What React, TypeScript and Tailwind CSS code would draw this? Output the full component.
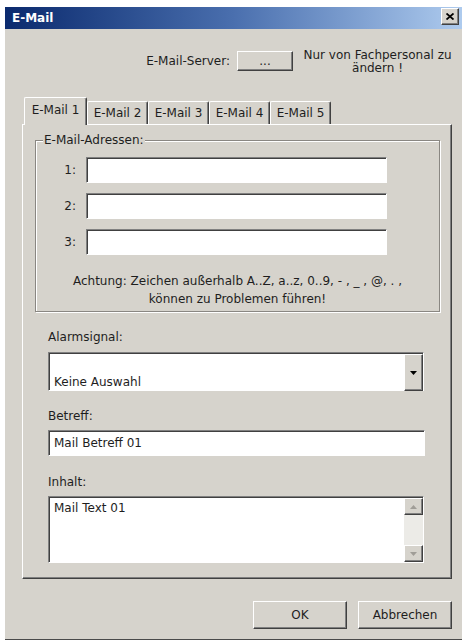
import React from 'react';

// classic 3D frame helpers
const raised =
  'border border-t-white border-l-white border-r-[#404040] border-b-[#404040] shadow-[inset_-1px_-1px_0_#808080]';
const sunken =
  'border border-t-[#808080] border-l-[#808080] border-r-white border-b-white shadow-[inset_1px_1px_0_#404040]';

const ArrowDown: React.FC<{ color?: string }> = ({ color = '#000' }) => (
  <svg width="7" height="4" viewBox="0 0 7 4">
    <path d="M0 0h7L3.5 4z" fill={color} />
  </svg>
);

const ArrowUp: React.FC<{ color?: string }> = ({ color = '#000' }) => (
  <svg width="7" height="4" viewBox="0 0 7 4">
    <path d="M0 4h7L3.5 0z" fill={color} />
  </svg>
);

const tabs = ['E-Mail 1', 'E-Mail 2', 'E-Mail 3', 'E-Mail 4', 'E-Mail 5'];

export default function App() {
  return (
    <div className="w-[462px] h-[643px] bg-white pt-[7px] pl-[5px] font-['DejaVu_Sans',sans-serif] text-[12px] text-[#1e1e1e]">
      <div className="w-[457px] h-[633px] flex flex-col bg-[#d6d3cc] border-b border-b-[#4a4a4a]">
        {/* title bar */}
        <div className="h-[22px] flex items-start justify-between pl-[7px] pr-[3px] bg-linear-to-r from-[#0b2a6e] via-[#4a6fae] to-[#aecbee]">
          <span className="mt-[3px] leading-[16px] font-bold text-white">E-Mail</span>
          <button className={`mt-[1px] w-[18px] h-[17px] flex items-center justify-center bg-[#d6d3cc] ${raised}`}>
            <svg width="8" height="7" viewBox="0 0 8 7">
              <path d="M0.5 0.5L7.5 6.5M7.5 0.5L0.5 6.5" stroke="#000" strokeWidth="1.8" />
            </svg>
          </button>
        </div>

        {/* server row */}
        <div className="mt-[22px] flex items-start">
          <div className="w-[225px] h-[20px] leading-[20px] text-right">E-Mail-Server:</div>
          <button className={`ml-[7px] w-[56px] h-[20px] leading-[16px] bg-[#d6d3cc] ${raised}`}>...</button>
          <div className="ml-[7px] -mt-[2px] w-[155px] text-center leading-[13px]">
            Nur von Fachpersonal zu
            <br />
            ändern !
          </div>
        </div>

        {/* tab strip */}
        <div className="mt-[22px] ml-[19px] h-[28px] -mb-px flex items-end relative z-10">
          {tabs.map((t, i) =>
            i === 0 ? (
              <div
                key={t}
                className="w-[63px] h-[28px] pb-[3px] flex items-center justify-center bg-[#d6d3cc] border-t border-l border-r border-t-white border-l-white border-r-[#404040] rounded-t-[2px] shadow-[inset_-1px_0_0_#808080]"
              >
                {t}
              </div>
            ) : (
              <div
                key={t}
                className="w-[61px] h-[23px] mb-px flex items-center justify-center bg-[#d6d3cc] border-t border-l border-r border-t-white border-l-white border-r-[#404040] rounded-t-[2px] shadow-[inset_-1px_0_0_#808080]"
              >
                {t}
              </div>
            )
          )}
        </div>

        {/* tab page */}
        <div className={`ml-[17px] w-[430px] h-[455px] flex flex-col ${raised}`}>
          <div className="relative mt-[15px] ml-[12px] w-[405px] h-[172px] border border-[#8a8782] shadow-[inset_1px_1px_0_#fff,1px_1px_0_#fff]">
            <span className="absolute left-[7px] -top-[8px] px-[1px] leading-[14px] bg-[#d6d3cc]">E-Mail-Adressen:</span>
            <div className="mt-[16px] flex flex-col gap-[10px]">
              {[1, 2, 3].map((n) => (
                <div key={n} className="flex items-center">
                  <span className="w-[40px] text-right">{n}:</span>
                  <div className={`ml-[10px] w-[301px] h-[26px] bg-white ${sunken}`} />
                </div>
              ))}
            </div>
            <p className="mt-[17px] text-center leading-[18px]">
              Achtung: Zeichen außerhalb A..Z, a..z, 0..9, - , _ , @, . ,
              <br />
              können zu Problemen führen!
            </p>
          </div>

          <div className="ml-[25px] mt-[17px] leading-[16px]">Alarmsignal:</div>
          <div className={`ml-[25px] mt-[7px] w-[376px] h-[39px] flex bg-white ${sunken}`}>
            <div className="flex-1 flex items-end pl-[5px] leading-[16px]">Keine Auswahl</div>
            <div className={`w-[19px] h-full mt-px flex items-center justify-center bg-[#d6d3cc] ${raised}`}>
              <ArrowDown />
            </div>
          </div>

          <div className="ml-[25px] mt-[17px] leading-[16px]">Betreff:</div>
          <div className={`ml-[25px] mt-[6px] w-[377px] h-[26px] flex items-center pl-[5px] bg-white ${sunken}`}>
            Mail Betreff 01
          </div>

          <div className="ml-[25px] mt-[18px] leading-[16px]">Inhalt:</div>
          <div className={`ml-[25px] mt-[6px] w-[376px] h-[67px] flex bg-white ${sunken}`}>
            <div className="flex-1 pl-[5px] pt-[3px] leading-[16px]">Mail Text 01</div>
            <div className="w-[19px] mt-px flex flex-col bg-[#ecebe7]">
              <div className={`h-[17px] flex items-center justify-center bg-[#d6d3cc] ${raised}`}>
                <ArrowUp color="#a09d97" />
              </div>
              <div className="flex-1" />
              <div className={`h-[17px] flex items-center justify-center bg-[#d6d3cc] ${raised}`}>
                <ArrowDown color="#a09d97" />
              </div>
            </div>
          </div>
        </div>

        {/* dialog buttons */}
        <div className="mt-[22px] pr-[10px] flex justify-end gap-[11px]">
          <button className={`w-[94px] h-[28px] bg-[#d6d3cc] ${raised}`}>OK</button>
          <button className={`w-[94px] h-[28px] bg-[#d6d3cc] ${raised}`}>Abbrechen</button>
        </div>
      </div>
    </div>
  );
}
